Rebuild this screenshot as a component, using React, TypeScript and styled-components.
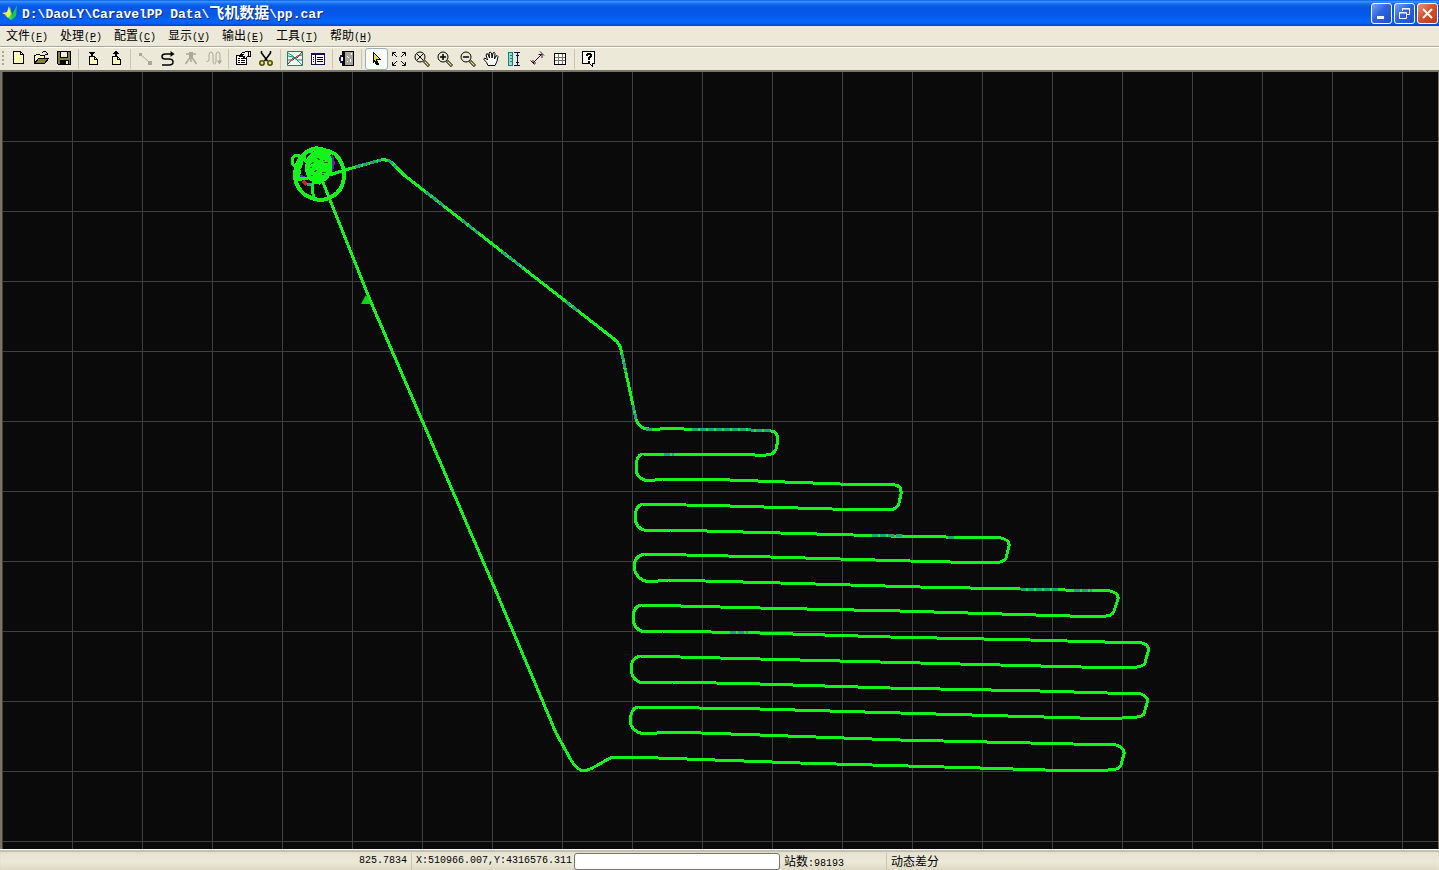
import React from 'react';
import styled, { createGlobalStyle } from 'styled-components';

const GlobalStyle = createGlobalStyle`
  * { box-sizing: border-box; }
  body { margin: 0; background: #ece9d8; }
`;

const latin = '"Liberation Mono", "Noto Sans CJK SC", monospace';
const cjk = '"Noto Sans CJK SC", sans-serif';

const Window = styled.div`
  display: flex;
  flex-direction: column;
  height: 100vh;
  background: #ece9d8;
  color: #000;
  font: 10px/14px ${latin};
`;

const TitleBar = styled.header`
  display: flex;
  align-items: center;
  flex: none;
  height: 26px;
  padding: 0 1px 0 2px;
  background: linear-gradient(
    #0a5be8 0%, #3a93ff 6%, #1270f5 14%, #0557e4 26%,
    #0458ea 55%, #0464fb 80%, #0560f5 90%, #0340c0 100%
  );
`;

const Title = styled.h1`
  flex: 1;
  margin: 0 0 0 4px;
  color: #fff;
  font: bold 13px/20px ${latin};
  text-shadow: 1px 1px 0 #0a2a8c;
  white-space: pre;
`;

const TitleCjk = styled.span`
  font-family: ${cjk};
  font-size: 15px;
`;

const WindowButtons = styled.div`
  display: flex;
  gap: 2px;
`;

const WindowButton = styled.button<{ $danger?: boolean }>`
  display: grid;
  place-items: center;
  width: 21px;
  height: 21px;
  padding: 0;
  border: 1px solid #fff;
  border-radius: 3px;
  background: ${(p) =>
    p.$danger
      ? 'linear-gradient(135deg, #e99a80, #d9502c 45%, #c03a12)'
      : 'linear-gradient(135deg, #7aa5f5, #2f63df 45%, #1c4fcf)'};
`;

const MenuBar = styled.nav`
  display: flex;
  align-items: flex-start;
  flex: none;
  height: 22px;
  border-bottom: 1px solid #fff;
  box-shadow: inset 0 -1px 0 #aca899;
`;

const MenuItem = styled.button`
  width: 54px;
  height: 18px;
  padding: 0 0 0 6px;
  border: 0;
  background: none;
  color: #000;
  font: 10px/18px ${latin};
  text-align: left;
  white-space: nowrap;
`;

const Cjk = styled.span`
  font-family: ${cjk};
  font-size: 12px;
`;

const Toolbar = styled.div`
  display: flex;
  align-items: center;
  flex: none;
  height: 22px;
  padding-left: 2px;
`;

const Grip = styled.span`
  width: 2px;
  height: 16px;
  margin-right: 3px;
  background: repeating-linear-gradient(#a5a899 0 2px, transparent 2px 4px);
`;

const ToolButton = styled.button<{ $active?: boolean }>`
  display: flex;
  align-items: center;
  width: 23px;
  height: 22px;
  padding: 0 0 0 ${(p) => (p.$active ? 2 : 3)}px;
  border: ${(p) => (p.$active ? '1px solid #98b0c4' : '0')};
  border-radius: 3px;
  background: ${(p) => (p.$active ? '#fbfbf7' : 'none')};
`;

const Divider = styled.span`
  width: 1px;
  height: 20px;
  margin: 0 3px 0 2px;
  background: #c9c5b2;
`;

const MapView = styled.main`
  flex: 1;
  min-height: 0;
  border: solid #77756a;
  border-width: 2px 1px 0 2px;
  background: #0a0a0a;
`;

const MapSvg = styled.svg`
  display: block;
  width: 100%;
  height: 100%;
`;

const StatusBar = styled.footer`
  display: grid;
  grid-template-columns: 412px 162px 206px 107px 1fr;
  flex: none;
  height: 21px;
  padding-top: 3px;
  border-top: 1px solid #fff;
  box-shadow: inset 0 2px 1px #c2bfae;
  background: linear-gradient(#e4e1cf, #ece9d8 60%, #dcd8c2);
`;

const StatusCell = styled.div<{ $right?: boolean; $line?: boolean }>`
  padding: 0 4px;
  border-right: ${(p) => (p.$line ? '1px solid #c9c5b2' : '0')};
  line-height: 16px;
  text-align: ${(p) => (p.$right ? 'right' : 'left')};
  white-space: nowrap;
`;

const Progress = styled.input`
  width: 100%;
  height: 17px;
  border: 1px solid #77756e;
  border-radius: 3px;
  background: #fff;
`;

const Icon = ({ children, smooth }: { children: React.ReactNode; smooth?: boolean }) => (
  <svg
    width="16"
    height="16"
    viewBox="0 0 16 16"
    fill="none"
    stroke="#000"
    shapeRendering={smooth ? 'auto' : 'crispEdges'}
    aria-hidden
  >
    {children}
  </svg>
);

const Lens = ({ children }: { children: React.ReactNode }) => (
  <Icon smooth>
    <circle cx="6" cy="6" r="5" />
    {children}
    <path d="M10 10l5 5" stroke="#000" strokeWidth="3" />
    <path d="M10.5 10.5l4 4" stroke="#e8e070" strokeWidth="1.5" />
  </Icon>
);

type Tool = { label: string; icon: React.ReactNode; active?: boolean; disabled?: boolean };

const groups: Tool[][] = [
  [
    {
      label: '新建',
      icon: (
        <Icon>
          <path d="M3.5 .5h7l3 3v9h-10z" fill="#ffffb8" />
          <path d="M10.5 .5v3h3" />
        </Icon>
      ),
    },
    {
      label: '打开',
      icon: (
        <Icon>
          <path d="M1.500 12.500v-8h1l1-1h3l1 1h4v3" fill="#ffffa8" />
          <path d="M1.500 12.500l4-5h10l-4 5z" fill="#80803a" />
          <path d="M9 1.500h1M10 .5h3M13 1.500h1M14.500 2v2M12 3.500h3" />
        </Icon>
      ),
    },
    {
      label: '保存',
      icon: (
        <Icon>
          <path d="M1.500 .5h13v13h-12l-1-1z" fill="#80803a" />
          <path d="M4.500 .5h7v6h-7z" fill="#ece9d8" />
          <path d="M4 9h9v5H4z" fill="#000" stroke="none" />
          <path d="M10 10h2v3h-2z" fill="#ece9d8" stroke="none" />
        </Icon>
      ),
    },
  ],
  [
    {
      label: '导入',
      icon: (
        <Icon>
          <path d="M4.500 5.500h5l3 3v5h-8z" fill="#ffffb8" />
          <path d="M9.500 5.500v3h3" />
          <path d="M4 1h6v1H9v1H8v2H6V3H5V2H4z" fill="#000" stroke="none" />
        </Icon>
      ),
    },
    {
      label: '导出',
      icon: (
        <Icon>
          <path d="M4.500 5.500h5l3 3v5h-8z" fill="#ffffb8" />
          <path d="M9.500 5.500v3h3" />
          <path d="M7 0h2v1h1v1h1v1H9v2H7V3H5V2h1V1h1z" fill="#000" stroke="none" />
        </Icon>
      ),
    },
  ],
  [
    {
      label: '连线',
      disabled: true,
      icon: (
        <Icon smooth>
          <path d="M4 4l8 7" stroke="#aca899" />
          <path d="M2 2h3v3H2zM11 10h4v4h-4z" fill="#aca899" stroke="none" />
        </Icon>
      ),
    },
    {
      label: '轨迹',
      icon: (
        <Icon smooth>
          <path d="M13 3H5.500Q2 3 2 5.500T5 8h4q4 0 4 3t-4 3H2" strokeWidth="1.500" />
          <path d="M10.500 0l4 3-4 3z" fill="#000" stroke="none" />
        </Icon>
      ),
    },
    {
      label: '基站',
      disabled: true,
      icon: (
        <Icon smooth>
          <path d="M3 3h10M8 3v8M8 5l-5.500 8M8 5l5.500 8" stroke="#aca899" strokeWidth="1.500" />
          <path d="M6 1h4v5H6z" fill="#aca899" stroke="none" />
        </Icon>
      ),
    },
    {
      label: '动态',
      disabled: true,
      icon: (
        <Icon smooth>
          <path d="M.5 10Q2 12 3 9V4q0-3 2-3t2 3v6q0 3 1.500 3T10 10V4q0-3 2-3t2 3v8" stroke="#aca899" />
          <path d="M11 9.500h5l-2.500 4z" fill="#aca899" stroke="none" />
        </Icon>
      ),
    },
  ],
  [
    {
      label: '属性',
      icon: (
        <Icon>
          <path d="M1.500 4.500h10v9h-10z" fill="#fff" />
          <path d="M3 7.500h2M6 7.500h4M3 9.500h2M6 9.500h4M3 11.500h2M6 11.500h4" />
          <path d="M4.500 5.500l3-4h2l1-1h5v5h-3l-2 2h-2l1-2z" fill="#f0efe6" />
          <path d="M6 5l3-2M13.500 1v4" />
        </Icon>
      ),
    },
    {
      label: '剪切',
      icon: (
        <Icon smooth>
          <path d="M3.500 0v2l6 8M12.500 0v2l-6 8" strokeWidth="1.500" />
          <circle cx="4" cy="12" r="2.200" stroke="#4c4a00" strokeWidth="1.500" fill="#e8e070" />
          <circle cx="12" cy="12" r="2.200" stroke="#4c4a00" strokeWidth="1.500" fill="#e8e070" />
        </Icon>
      ),
    },
  ],
  [
    {
      label: '曲线',
      icon: (
        <Icon smooth>
          <path d="M.5 .5h15v14H.5z" stroke="#1c8080" fill="#f4f8f0" />
          <path d="M1 13l5-6 4 0 5-6" stroke="#303030" />
          <path d="M1 2l5 3 4 4 5 5" stroke="#20a060" />
          <path d="M1 9l5 0 4-4 5-1" stroke="#c03030" />
          <path d="M1 5l5 1 4 3h5" stroke="#1c8080" />
        </Icon>
      ),
    },
    {
      label: '列表',
      icon: (
        <Icon>
          <path d="M1.500 2.500h13v11h-13z" fill="#fff" stroke="#10105c" />
          <path d="M1 3.500h14M5.500 3v10" stroke="#10105c" />
          <path d="M3 6.500h1M3 8.500h1M3 10.500h1M7 6.500h6M7 8.500h6M7 10.500h6" />
        </Icon>
      ),
    },
  ],
  [
    {
      label: '检查',
      icon: (
        <Icon>
          <path d="M3.500 .5h11v14h-11z" fill="#a8a498" />
          <path d="M1 4h3v8H1zM0 6h1v4H0z" fill="#202060" stroke="none" />
          <path d="M3 1h3v13H3z" fill="#000" stroke="none" />
          <path d="M2 6h2v4H2z" fill="#fff" stroke="none" />
          <path d="M12 2v2M8 5l2 2M11 8v3M8 10v1" stroke="#fff" />
        </Icon>
      ),
    },
  ],
  [
    {
      label: '选择',
      active: true,
      icon: (
        <Icon>
          <path d="M5.500 1.500l7 7h-4l2 5h-2l-2-4-1 1z" fill="#e8e040" />
          <path d="M5.500 1v11M8 10l2 4" />
        </Icon>
      ),
    },
    {
      label: '全图',
      icon: (
        <Icon smooth>
          <path d="M1.500 5V1.500H5M11 1.500h3.500V5M14.500 11v3.500H11M5 14.500H1.500V11" />
          <path d="M2 2l4 4M14 2l-4 4M14 14l-4-4M2 14l4-4" />
        </Icon>
      ),
    },
    { label: '缩放', icon: <Lens><path d="M3 3l6 6M9 3L3 9" /></Lens> },
    { label: '放大', icon: <Lens><path d="M3 6h6M6 3v6" strokeWidth="1.5" /></Lens> },
    { label: '缩小', icon: <Lens><path d="M3 6h6" strokeWidth="1.5" /></Lens> },
    {
      label: '平移',
      icon: (
        <Icon smooth>
          <path
            d="M5 14.500Q4 11 1 8.500q-.5-2 2-1L4.500 9 3 4q.5-2 2-1l1.500 4L6 2q1-2 2.500 0L9 7l1-5q1.500-1.500 2 .5L11.500 8 13 5q1.500-1 2 .5-.5 5-3 9z"
            fill="#fff"
          />
        </Icon>
      ),
    },
    {
      label: '标尺',
      icon: (
        <Icon>
          <path d="M2.500 1.500h4v13h-4z" fill="#9cdcd4" stroke="#108080" />
          <path d="M4 4.500h3M4 7.500h3M4 10.500h3" stroke="#108080" />
          <path d="M8 1.500h6M8 14.500h6M11.500 2v12M10 4.500h3M10 11.500h3" stroke="#10104c" />
        </Icon>
      ),
    },
    {
      label: '测距',
      icon: (
        <Icon smooth>
          <path d="M4 12l9-9M1.500 9.500l4 4M11 .5l4 4" stroke="#301030" />
          <path d="M9.500 3.500H13V7M4 9v3h3" stroke="#301030" />
        </Icon>
      ),
    },
    {
      label: '网格',
      icon: (
        <Icon>
          <path d="M2.500 2.500h11v11h-11z" fill="#fff" />
          <path d="M6.500 3v10M10.500 3v10M3 6.500h10M3 9.500h10" stroke="#77756a" />
        </Icon>
      ),
    },
  ],
  [
    {
      label: '帮助',
      icon: (
        <Icon>
          <path d="M1.500 .5h12v12h-2v3l-3-3h-7z" fill="#fffff0" />
          <path d="M5 5V3h1V2h4v1h1v3h-1v1H9v2H7V6h1V5h1V4H7v1zM7 10h2v1.500H7z" fill="#000" stroke="none" />
        </Icon>
      ),
    },
  ],
];

const menus = [
  ['文件', 'F'],
  ['处理', 'P'],
  ['配置', 'C'],
  ['显示', 'V'],
  ['输出', 'E'],
  ['工具', 'T'],
  ['帮助', 'H'],
];

const surveyPath = `
  M326 176L345 170L381 160Q388 159 392 163L404 175L523 268L614 339Q620 344 621 350L636 419
  Q639 429 649 429L660 429L672 428L684 429L730 429L771 431Q778 432 778 440L776 449Q774 455 766 455
  L758 456L752 454L745 455L642 454Q636 456 636 468Q636 479 648 481L662 479L730 480L840 484L895 485
  Q902 486 901 494L899 503Q897 510 887 510L832 509L730 506L642 504Q635 507 635 517Q635 529 648 531
  L670 530L780 533L890 536L1001 538Q1010 540 1009 546L1006 558Q1004 563 990 563L910 561L770 557L644 554
  Q634 556 634 568Q636 579 648 582L668 580L780 583L920 587L1020 589L1110 591Q1119 593 1118 599
  L1114 611Q1112 617 1102 616L1070 616L900 611L760 608L641 605Q633 607 633 617Q633 630 645 632L662 631
  L760 633L890 637L1030 640L1142 643Q1150 645 1148 652L1145 663Q1143 668 1122 668L1000 665L880 662L760 659
  L640 656Q631 658 631 669Q632 681 643 683L672 682L760 684L890 688L1040 691L1141 694Q1149 697 1147 703
  L1144 714Q1141 718 1122 718L1080 718L900 713L760 709L638 707Q631 708 630 721Q631 731 643 734L672 732
  L760 735L900 740L1030 743L1116 745Q1125 748 1124 754L1121 765Q1120 770 1108 770L1078 771L980 768
  L800 763L630 757L613 757Q608 759 603 762Q590 770 584 771Q577 770 571 760L556 733L532 676L492 582
  L370 300L328 195L322 180`;

const blendedSpans =
  'M355 167L381 160M388 160L396 167M426 192L444 206M462 220L478 233M502 252L523 268M566 302L578 311M622 354L626 372M633 405L636 419M646 429H652M692 429L730 429L771 431M664 454H674M872 535.5L902 536M948 537H956M1020 589L1060 590M1074 590L1092 591M730 632L748 633';

const FlightMap = () => (
  <MapSvg role="img" aria-label="航迹图">
    <defs>
      <pattern id="grid" x="70" y="69" width="70" height="70" patternUnits="userSpaceOnUse">
        <path d="M.5 0v70M0 .5h70" stroke="#404040" fill="none" />
      </pattern>
    </defs>
    <rect width="100%" height="100%" fill="url(#grid)" />
    <g
      transform="translate(-2 -72)"
      fill="none"
      stroke="#12f41a"
      strokeWidth="3"
      strokeLinejoin="round"
      shapeRendering="crispEdges"
    >
      <path d={surveyPath} />
      <path d={blendedSpans} stroke="#24a078" strokeDasharray="6 2" />
      <path d="M331 156q4 8-1 16" stroke="#5a28b4" strokeWidth="4" />
      <path d="M297 175l8 3" stroke="#6428c8" />
      <path d="M303 181l4 4" stroke="#d02020" />
      <path d="M307 185l5-1" stroke="#28a08c" />
      <path
        d="M303 155Q309 149 318 149Q328 150 335 154Q344 163 344 174Q344 186 337 193Q329 200 319 200Q307 198 301 191Q295 184 295 174Q296 162 303 155z"
        strokeWidth="4"
      />
      <ellipse cx="297" cy="161" rx="5" ry="6" />
      <ellipse cx="309" cy="157" rx="5" ry="6" />
      <path d="M306 153q5-6 12-5q8 1 12 7" />
      <path d="M308 159l6-6l10-1l6 6l1 12l-5 9l-9 4l-8-5l-3-9z" fill="#12f41a" />
      <path d="M301 166l-6 9l3 5l8-2M300 170l-2 8l10 1M314 180q-3 9 0 18M318 184l6-6l8-5" />
      <path
        d="M310 165l4-3m3-4l3 2m4 3l4-1m-14 10l3-2m5 2l4 1m-3-13l2 1m-14 14l2 1m-3-9l2 0m10 8l2-1"
        stroke="#086018"
        strokeWidth="1"
      />
    </g>
    <path d="M364 223l5 9h-10z" fill="#12d41a" />
  </MapSvg>
);

const AppLogo = () => (
  <svg width="16" height="16" viewBox="0 0 16 16" aria-hidden>
    <path d="M8 14L15 0l-1 11-4 4z" fill="#20c840" />
    <path d="M2 10l5 1 1-9 2 7-1 6z" fill="#58d848" />
    <path d="M0 8l5-1 2-6 2 8-3 4-2-3z" fill="#f0f058" />
  </svg>
);

export default function App() {
  return (
    <Window>
      <GlobalStyle />
      <TitleBar>
        <AppLogo />
        <Title>
          D:\DaoLY\CaravelPP Data\<TitleCjk>飞机数据</TitleCjk>\pp.car
        </Title>
        <WindowButtons>
          <WindowButton aria-label="最小化">
            <svg width="17" height="17" viewBox="0 0 17 17"><path d="M4 11h7v3H4z" fill="#fff" /></svg>
          </WindowButton>
          <WindowButton aria-label="还原">
            <svg width="17" height="17" viewBox="0 0 17 17" fill="none" stroke="#fff">
              <path d="M6.500 6V3.500h7v6H11M6 4h8" />
              <path d="M3.500 7.500h7v6h-7zM3 8h8" />
            </svg>
          </WindowButton>
          <WindowButton $danger aria-label="关闭">
            <svg width="17" height="17" viewBox="0 0 17 17"><path d="M4 4l9 9M13 4l-9 9" stroke="#fff" strokeWidth="2" /></svg>
          </WindowButton>
        </WindowButtons>
      </TitleBar>
      <MenuBar>
        {menus.map(([name, key]) => (
          <MenuItem key={key}>
            <Cjk>{name}</Cjk>(<u>{key}</u>)
          </MenuItem>
        ))}
      </MenuBar>
      <Toolbar role="toolbar">
        <Grip />
        {groups.map((group, index) => (
          <React.Fragment key={index}>
            {index > 0 && <Divider />}
            {group.map((tool) => (
              <ToolButton key={tool.label} aria-label={tool.label} $active={tool.active} disabled={tool.disabled}>
                {tool.icon}
              </ToolButton>
            ))}
          </React.Fragment>
        ))}
      </Toolbar>
      <MapView>
        <FlightMap />
      </MapView>
      <StatusBar>
        <StatusCell $right $line>825.7834</StatusCell>
        <StatusCell>X:510966.007,Y:4316576.311</StatusCell>
        <Progress aria-label="进度" readOnly />
        <StatusCell $line>
          <Cjk>站数</Cjk>:98193
        </StatusCell>
        <StatusCell>
          <Cjk>动态差分</Cjk>
        </StatusCell>
      </StatusBar>
    </Window>
  );
}
